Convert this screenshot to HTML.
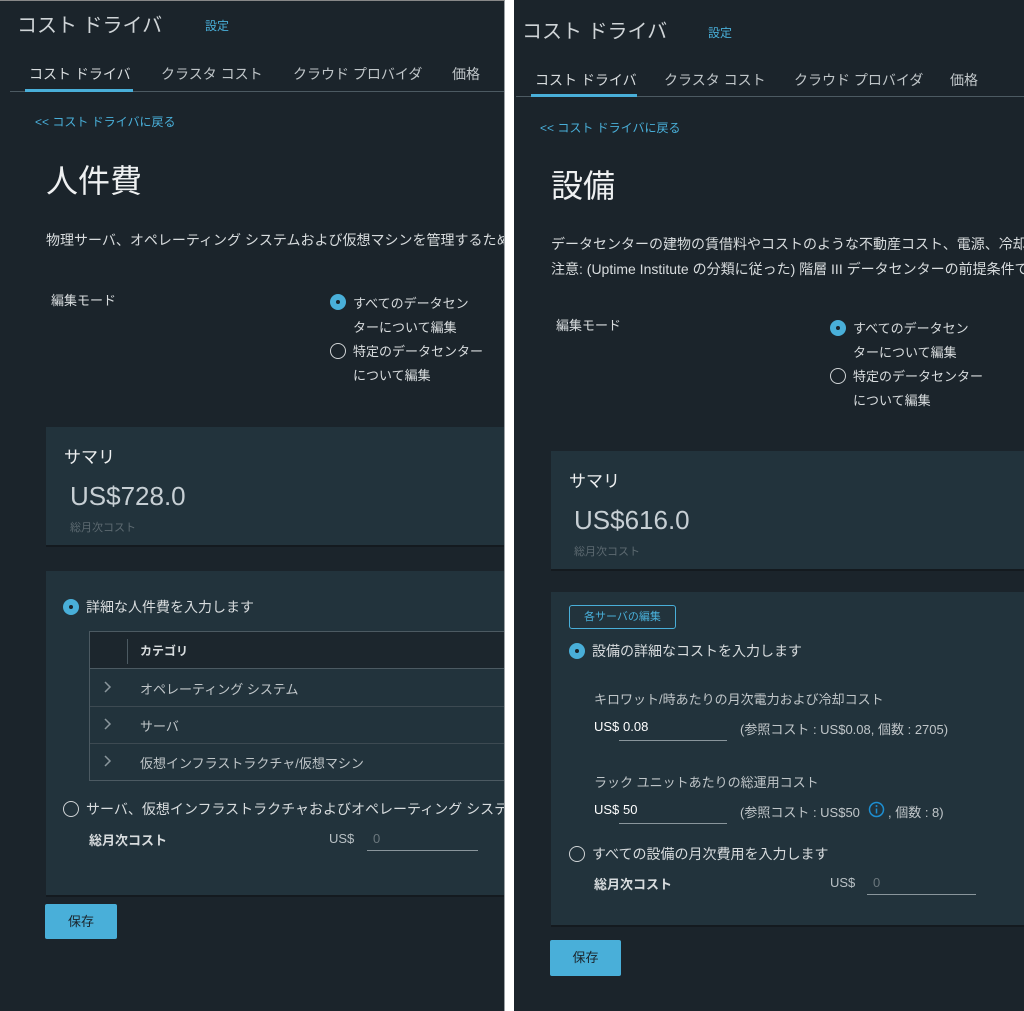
<!DOCTYPE html>
<html><head><meta charset="utf-8"><style>
*{margin:0;padding:0;box-sizing:border-box}
body{width:1024px;height:1011px;background:#fff;position:relative;overflow:hidden;font-family:"Liberation Sans","Noto Sans CJK JP",sans-serif;color:#d8dcde}
.p{position:absolute;top:0;height:1011px;background:#1b242b;overflow:hidden}
.a{position:absolute;white-space:nowrap}
.lnk{color:#49afd9}
.card{position:absolute;background:#22333c;box-shadow:0 2px 0 #141a1f}
.r{position:absolute;width:16px;height:16px;border-radius:50%;border:1.5px solid #d0d4d6}
.r.on{border:none;background:#49afd9}
.r.on::after{content:"";position:absolute;left:6px;top:6px;width:4px;height:4px;border-radius:50%;background:#1b242b}
.btn{position:absolute;background:#49afd9;color:#1b242b;font-size:13px;text-align:center;border-radius:2px}
.ul{position:absolute;height:1px;background:#8a969c}
.chev{position:absolute}
</style></head><body>
<div class="p" style="left:0;width:505px;border-top:1px solid #888;border-right:1px solid #9aa0a4">
 <div class="a" style="left:17px;top:8px;font-size:20px;color:#cfd4d7">コスト ドライバ</div>
 <div class="a lnk" style="left:205px;top:16px;font-size:12px">設定</div>
 <div class="a" style="left:29px;top:63px;font-size:14px;color:#d8dcde">コスト ドライバ</div>
 <div class="a" style="left:161px;top:63px;font-size:14px;color:#c0c6c9">クラスタ コスト</div>
 <div class="a" style="left:293px;top:63px;font-size:14px;color:#c0c6c9">クラウド プロバイダ</div>
 <div class="a" style="left:452px;top:63px;font-size:14px;color:#c0c6c9">価格</div>
 <div class="a" style="left:10px;top:90px;width:495px;height:1px;background:#4c5a62"></div>
 <div class="a" style="left:25px;top:88px;width:108px;height:3px;background:#49afd9"></div>
 <div class="a lnk" style="left:35px;top:112px;font-size:12px">&lt;&lt; コスト ドライバに戻る</div>
 <div class="a" style="left:46px;top:155px;font-size:32px;color:#eef0f1">人件費</div>
 <div class="a" style="left:46px;top:229px;font-size:14px;color:#d8dcde">物理サーバ、オペレーティング システムおよび仮想マシンを管理するため</div>
 <div class="a" style="left:51px;top:289px;font-size:13px">編集モード</div>
 <div class="r on" style="left:330px;top:293px"></div>
 <div class="a" style="left:353px;top:291px;font-size:13px;line-height:24px">すべてのデータセン<br>ターについて編集</div>
 <div class="r" style="left:330px;top:342px"></div>
 <div class="a" style="left:353px;top:339px;font-size:13px;line-height:24px">特定のデータセンター<br>について編集</div>
 <div class="card" style="left:46px;top:426px;width:460px;height:118px">
  <div class="a" style="left:18px;top:16px;font-size:17px;color:#eef0f1">サマリ</div>
  <div class="a" style="left:24px;top:54px;font-size:26px;color:#c7cfd4">US$728.0</div>
  <div class="a" style="left:24px;top:92px;font-size:11px;color:#5d6a71">総月次コスト</div>
 </div>
 <div class="card" style="left:46px;top:570px;width:460px;height:324px">
  <div class="r on" style="left:17px;top:28px"></div>
  <div class="a" style="left:40px;top:26px;font-size:14px">詳細な人件費を入力します</div>
  <div class="a" style="left:43px;top:60px;width:420px;height:150px;border:1px solid #4c5a62;border-right:none">
   <div class="a" style="left:0;top:0;width:420px;height:37px;background:#1c262d;border-bottom:1px solid #4c5a62"></div>
   <div class="a" style="left:37px;top:7px;width:1px;height:25px;background:#4c5a62"></div>
   <div class="a" style="left:50px;top:10px;font-size:12px;font-weight:bold">カテゴリ</div>
   <svg class="chev" style="left:14px;top:49px" width="8" height="12"><path d="M1 1l5 5-5 5" stroke="#8a969c" stroke-width="1.5" fill="none"/></svg>
   <div class="a" style="left:50px;top:47px;font-size:13px;color:#c0c6c9">オペレーティング システム</div>
   <div class="a" style="left:0;top:74px;width:420px;height:1px;background:#3d4a52"></div>
   <svg class="chev" style="left:14px;top:86px" width="8" height="12"><path d="M1 1l5 5-5 5" stroke="#8a969c" stroke-width="1.5" fill="none"/></svg>
   <div class="a" style="left:50px;top:84px;font-size:13px;color:#c0c6c9">サーバ</div>
   <div class="a" style="left:0;top:111px;width:420px;height:1px;background:#3d4a52"></div>
   <svg class="chev" style="left:14px;top:123px" width="8" height="12"><path d="M1 1l5 5-5 5" stroke="#8a969c" stroke-width="1.5" fill="none"/></svg>
   <div class="a" style="left:50px;top:121px;font-size:13px;color:#c0c6c9">仮想インフラストラクチャ/仮想マシン</div>
  </div>
  <div class="r" style="left:17px;top:230px"></div>
  <div class="a" style="left:40px;top:228px;font-size:14px">サーバ、仮想インフラストラクチャおよびオペレーティング システ</div>
  <div class="a" style="left:43px;top:259px;font-size:13px;font-weight:bold">総月次コスト</div>
  <div class="a" style="left:283px;top:260px;font-size:13px;color:#b8c0c4">US$</div>
  <div class="a" style="left:327px;top:260px;font-size:13px;color:#6b777d">0</div>
  <div class="ul" style="left:321px;top:279px;width:111px"></div>
 </div>
 <div class="btn" style="left:45px;top:903px;width:72px;height:35px;line-height:35px">保存</div>
</div>

<div class="p" style="left:514px;width:510px">
 <div class="a" style="left:8px;top:15px;font-size:20px;color:#cfd4d7">コスト ドライバ</div>
 <div class="a lnk" style="left:194px;top:24px;font-size:12px">設定</div>
 <div class="a" style="left:21px;top:70px;font-size:14px;color:#d8dcde">コスト ドライバ</div>
 <div class="a" style="left:150px;top:70px;font-size:14px;color:#c0c6c9">クラスタ コスト</div>
 <div class="a" style="left:280px;top:70px;font-size:14px;color:#c0c6c9">クラウド プロバイダ</div>
 <div class="a" style="left:436px;top:70px;font-size:14px;color:#c0c6c9">価格</div>
 <div class="a" style="left:2px;top:96px;width:510px;height:1px;background:#4c5a62"></div>
 <div class="a" style="left:17px;top:94px;width:106px;height:3px;background:#49afd9"></div>
 <div class="a lnk" style="left:26px;top:119px;font-size:12px">&lt;&lt; コスト ドライバに戻る</div>
 <div class="a" style="left:37px;top:161px;font-size:32px;color:#eef0f1">設備</div>
 <div class="a" style="left:37px;top:232px;font-size:14px;line-height:25px">データセンターの建物の賃借料やコストのような不動産コスト、電源、冷却、<br>注意: (Uptime Institute の分類に従った) 階層 III データセンターの前提条件で</div>
 <div class="a" style="left:42px;top:315px;font-size:13px">編集モード</div>
 <div class="r on" style="left:316px;top:320px"></div>
 <div class="a" style="left:339px;top:317px;font-size:13px;line-height:24px">すべてのデータセン<br>ターについて編集</div>
 <div class="r" style="left:316px;top:368px"></div>
 <div class="a" style="left:339px;top:365px;font-size:13px;line-height:24px">特定のデータセンター<br>について編集</div>
 <div class="card" style="left:37px;top:451px;width:474px;height:118px">
  <div class="a" style="left:18px;top:16px;font-size:17px;color:#eef0f1">サマリ</div>
  <div class="a" style="left:23px;top:54px;font-size:26px;color:#c7cfd4">US$616.0</div>
  <div class="a" style="left:23px;top:92px;font-size:11px;color:#5d6a71">総月次コスト</div>
 </div>
 <div class="card" style="left:37px;top:592px;width:474px;height:333px">
  <div class="a" style="left:18px;top:13px;width:107px;height:24px;border:1px solid #49afd9;border-radius:3px;color:#49afd9;font-size:11px;text-align:center;line-height:22px">各サーバの編集</div>
  <div class="r on" style="left:18px;top:51px"></div>
  <div class="a" style="left:41px;top:49px;font-size:14px">設備の詳細なコストを入力します</div>
  <div class="a" style="left:43px;top:97px;font-size:13px;color:#c0c6c9">キロワット/時あたりの月次電力および冷却コスト</div>
  <div class="a" style="left:43px;top:127px;font-size:13px;color:#fff">US$</div>
  <div class="a" style="left:72px;top:127px;font-size:13px;color:#fff">0.08</div>
  <div class="ul" style="left:68px;top:148px;width:108px"></div>
  <div class="a" style="left:189px;top:127px;font-size:13px;color:#c0c6c9">(参照コスト : US$0.08, 個数 : 2705)</div>
  <div class="a" style="left:43px;top:180px;font-size:13px;color:#c0c6c9">ラック ユニットあたりの総運用コスト</div>
  <div class="a" style="left:43px;top:210px;font-size:13px;color:#fff">US$</div>
  <div class="a" style="left:72px;top:210px;font-size:13px;color:#fff">50</div>
  <div class="ul" style="left:68px;top:231px;width:108px"></div>
  <div class="a" style="left:189px;top:210px;font-size:13px;color:#c0c6c9">(参照コスト : US$50</div>
  <svg class="a" style="left:317px;top:209px" width="17" height="17"><circle cx="8.5" cy="8.5" r="7" stroke="#1d8ed1" stroke-width="1.5" fill="none"/><circle cx="8.5" cy="5" r="1" fill="#1d8ed1"/><path d="M8.5 7.5v5" stroke="#1d8ed1" stroke-width="1.5"/></svg>
  <div class="a" style="left:337px;top:210px;font-size:13px;color:#c0c6c9">, 個数 : 8)</div>
  <div class="r" style="left:18px;top:254px"></div>
  <div class="a" style="left:41px;top:252px;font-size:14px">すべての設備の月次費用を入力します</div>
  <div class="a" style="left:43px;top:282px;font-size:13px;font-weight:bold">総月次コスト</div>
  <div class="a" style="left:279px;top:283px;font-size:13px;color:#b8c0c4">US$</div>
  <div class="a" style="left:322px;top:283px;font-size:13px;color:#6b777d">0</div>
  <div class="ul" style="left:316px;top:302px;width:109px"></div>
 </div>
 <div class="btn" style="left:36px;top:940px;width:71px;height:36px;line-height:36px">保存</div>
</div>
</body></html>
